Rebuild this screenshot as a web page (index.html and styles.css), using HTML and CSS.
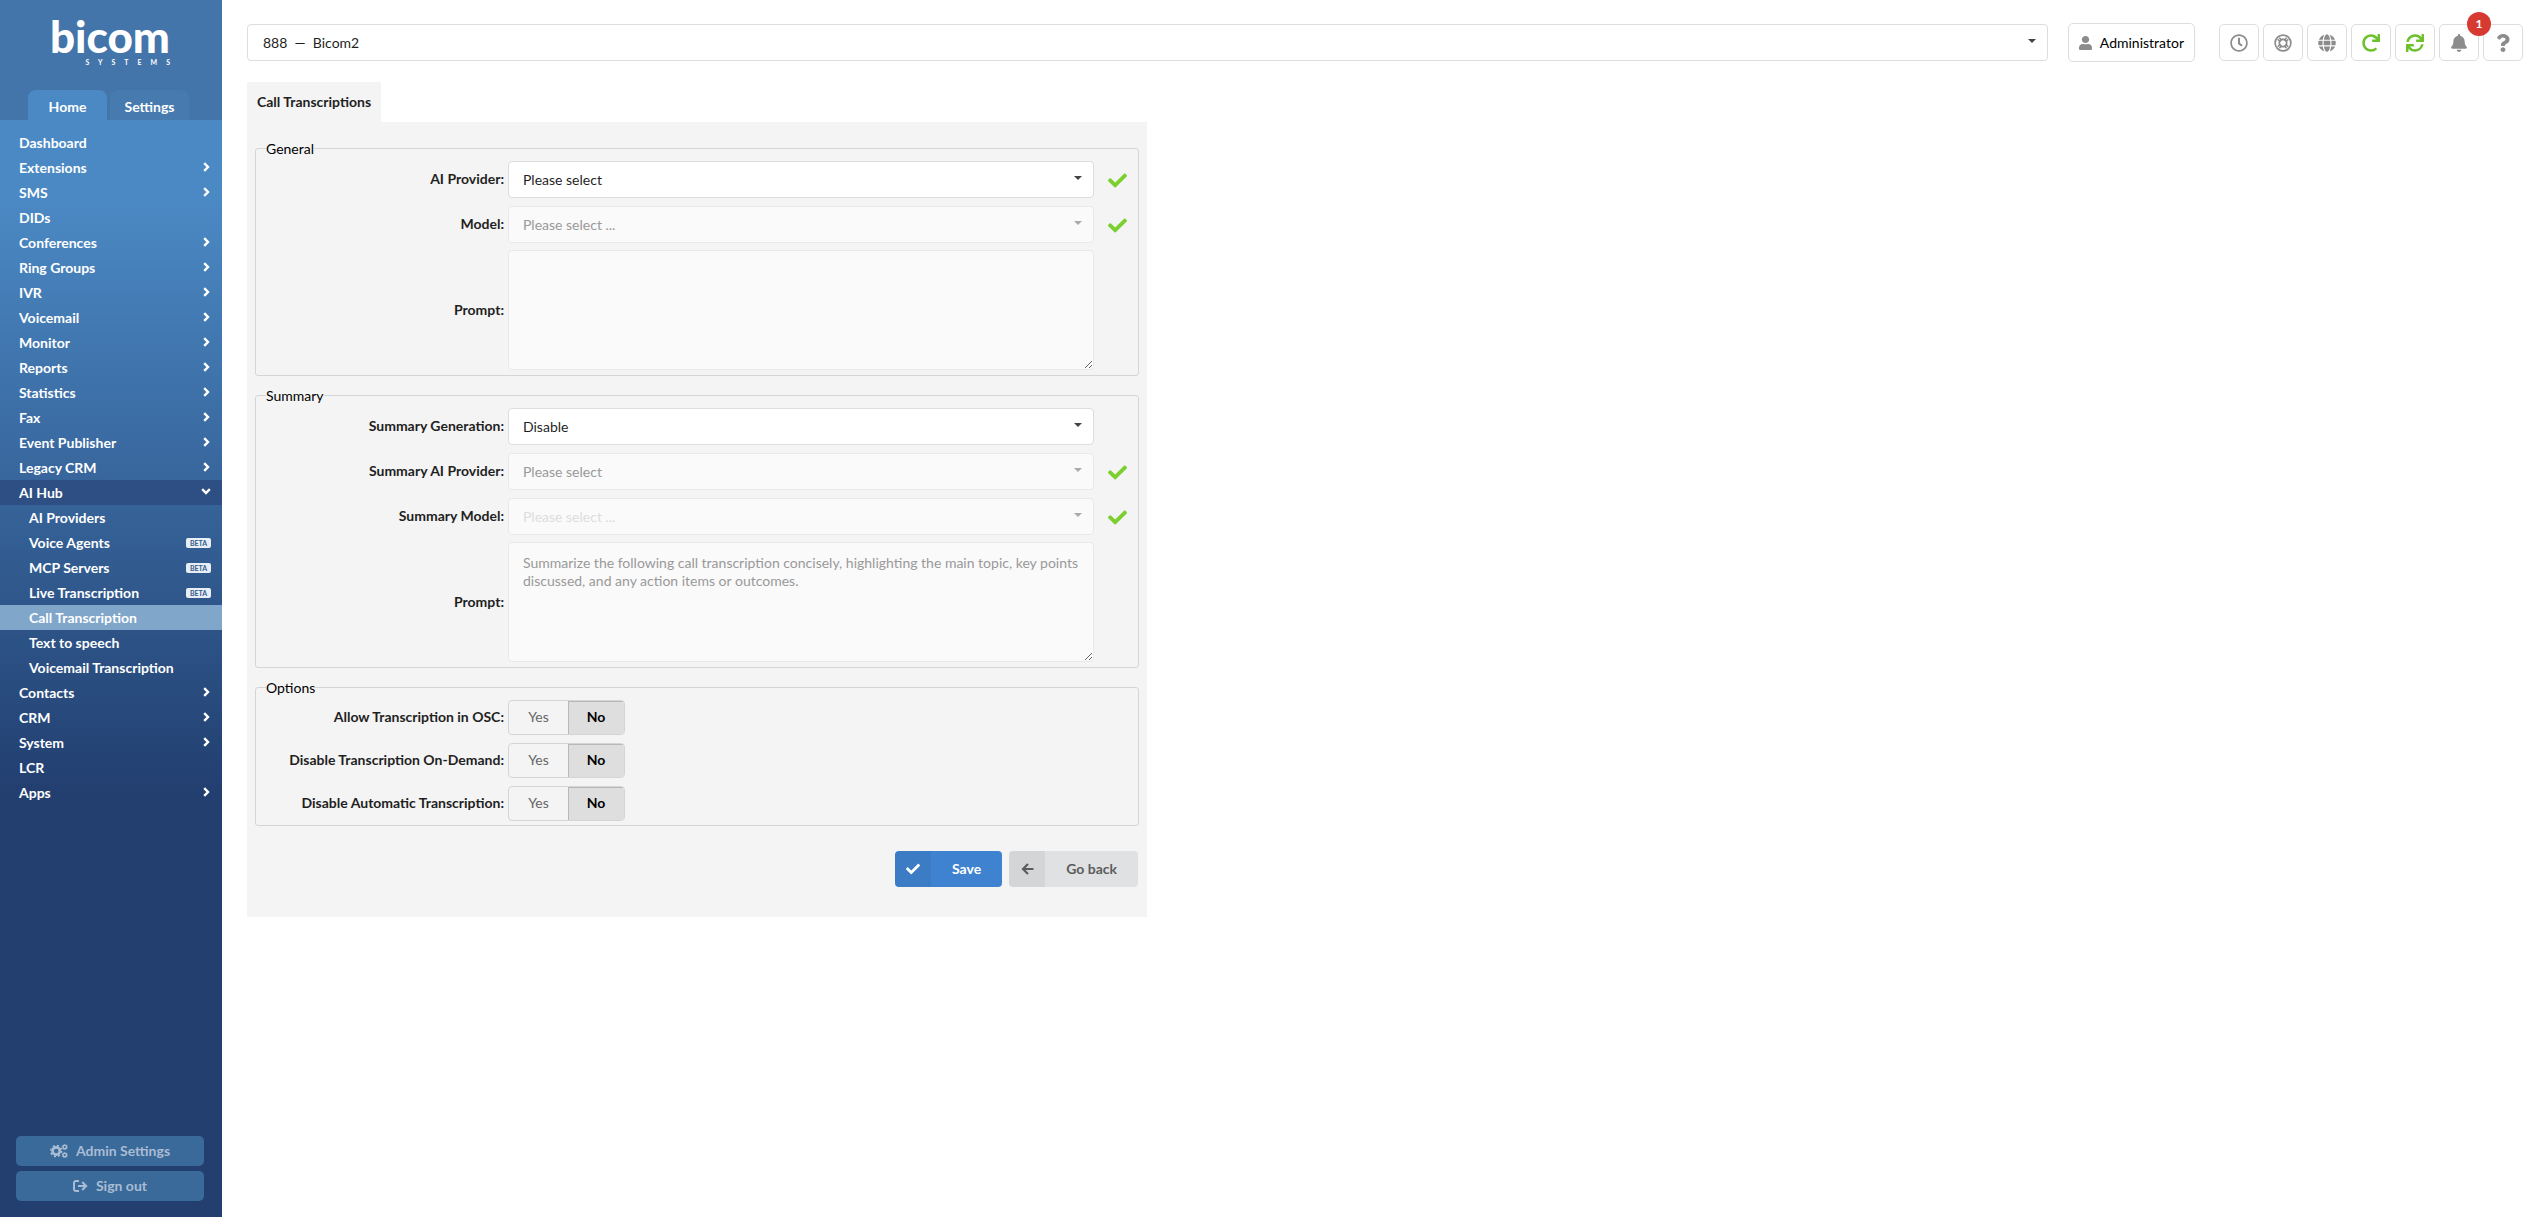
FILE: index.html
```html
<!DOCTYPE html>
<html lang="en">
<head>
    <meta charset="UTF-8">
    <meta name="viewport" content="width=device-width, initial-scale=1.0">
    <title>Call Transcriptions</title>
    <link rel="stylesheet" href="styles.css">
</head>
<body>
    <!-- shared icons -->
    <svg class="sprite" aria-hidden="true">
        <symbol id="i-right" viewBox="0 0 7 10"><path d="M1.200 1.200L5 5 1.200 8.800" fill="none" stroke="currentColor" stroke-width="2.4"/></symbol>
        <symbol id="i-down" viewBox="0 0 10 7"><path d="M1.200 1.200L5 5l3.800-3.800" fill="none" stroke="currentColor" stroke-width="2.4"/></symbol>
        <symbol id="i-check" viewBox="0 0 512 512"><path d="M173.9 439.4l-166.4-166.4c-10-10-10-26.2 0-36.2l36.2-36.2c10-10 26.2-10 36.2 0L192 312.7 432.1 72.6c10-10 26.2-10 36.2 0l36.2 36.2c10 10 10 26.2 0 36.2l-294.4 294.4c-10 10-26.2 10-36.2 0z"/></symbol>
    </svg>

    <aside class="sidebar">
        <div class="sidebar-head">
            <div class="logo">
                <span class="logo-name">bicom</span>
                <span class="logo-sub">SYSTEMS</span>
            </div>
            <div class="side-tabs">
                <a class="side-tab active" href="#">Home</a>
                <a class="side-tab" href="#">Settings</a>
            </div>
        </div>
        <nav class="menu">
            <a href="#">Dashboard</a>
            <a href="#">Extensions<svg class="chev"><use href="#i-right"/></svg></a>
            <a href="#">SMS<svg class="chev"><use href="#i-right"/></svg></a>
            <a href="#">DIDs</a>
            <a href="#">Conferences<svg class="chev"><use href="#i-right"/></svg></a>
            <a href="#">Ring Groups<svg class="chev"><use href="#i-right"/></svg></a>
            <a href="#">IVR<svg class="chev"><use href="#i-right"/></svg></a>
            <a href="#">Voicemail<svg class="chev"><use href="#i-right"/></svg></a>
            <a href="#">Monitor<svg class="chev"><use href="#i-right"/></svg></a>
            <a href="#">Reports<svg class="chev"><use href="#i-right"/></svg></a>
            <a href="#">Statistics<svg class="chev"><use href="#i-right"/></svg></a>
            <a href="#">Fax<svg class="chev"><use href="#i-right"/></svg></a>
            <a href="#">Event Publisher<svg class="chev"><use href="#i-right"/></svg></a>
            <a href="#">Legacy CRM<svg class="chev"><use href="#i-right"/></svg></a>
            <a class="open" href="#">AI Hub<svg class="chev chev-down"><use href="#i-down"/></svg></a>
            <a class="sub" href="#">AI Providers</a>
            <a class="sub" href="#">Voice Agents<span class="beta">BETA</span></a>
            <a class="sub" href="#">MCP Servers<span class="beta">BETA</span></a>
            <a class="sub" href="#">Live Transcription<span class="beta">BETA</span></a>
            <a class="sub current" href="#">Call Transcription</a>
            <a class="sub" href="#">Text to speech</a>
            <a class="sub" href="#">Voicemail Transcription</a>
            <a href="#">Contacts<svg class="chev"><use href="#i-right"/></svg></a>
            <a href="#">CRM<svg class="chev"><use href="#i-right"/></svg></a>
            <a href="#">System<svg class="chev"><use href="#i-right"/></svg></a>
            <a href="#">LCR</a>
            <a href="#">Apps<svg class="chev"><use href="#i-right"/></svg></a>
        </nav>
        <div class="sidebar-foot">
            <button type="button" class="side-btn">
                <svg class="line" width="18" height="14" viewBox="0 0 18 14">
                    <circle cx="6.2" cy="7" r="3.6" stroke-width="2.6"/>
                    <circle cx="6.2" cy="7" r="5.4" stroke-width="1.7" stroke-dasharray="2.12 2.12"/>
                    <circle cx="14.8" cy="3" r="1.8" stroke-width="1.5"/>
                    <circle cx="14.8" cy="3" r="2.6" stroke-width="0.8" stroke-dasharray="1.3 1.42"/>
                    <circle cx="14.8" cy="11" r="1.8" stroke-width="1.5"/>
                    <circle cx="14.8" cy="11" r="2.6" stroke-width="0.8" stroke-dasharray="1.3 1.42"/>
                </svg>
                <span>Admin Settings</span>
            </button>
            <button type="button" class="side-btn">
                <svg class="line" width="15" height="12" viewBox="0 0 15 12" stroke-width="2">
                    <path d="M6 1H3.200Q1 1 1 3.200V8.800Q1 11 3.200 11H6"/>
                    <path d="M5 6h8M9.200 2l4 4-4 4"/>
                </svg>
                <span>Sign out</span>
            </button>
        </div>
    </aside>

    <main class="main">
        <header class="topbar">
            <div class="select tenant">
                <select aria-label="Tenant">
                    <option>888 &nbsp;—&nbsp; Bicom2</option>
                </select>
            </div>
            <button type="button" class="user-btn">
                <svg class="user-icon" viewBox="0 0 448 512" preserveAspectRatio="none"><path d="M224 256c70.7 0 128-57.3 128-128S294.7 0 224 0 96 57.3 96 128s57.3 128 128 128zm89.6 32h-16.7c-22.2 10.2-46.9 16-72.9 16s-50.6-5.8-72.9-16h-16.7C60.2 288 0 348.2 0 422.4V464c0 26.5 21.5 48 48 48h352c26.5 0 48-21.5 48-48v-41.6c0-74.2-60.2-134.4-134.4-134.4z"/></svg>
                Administrator
            </button>
            <div class="tools">
                <button type="button" class="tool" aria-label="Time">
                    <svg viewBox="0 0 512 512"><path d="M256 8C119 8 8 119 8 256s111 248 248 248 248-111 248-248S393 8 256 8zm0 448c-110.500 0-200-89.500-200-200S145.500 56 256 56s200 89.500 200 200-89.500 200-200 200zm61.800-104.400l-84.900-61.700c-3.100-2.300-4.900-5.900-4.900-9.700V116c0-6.600 5.400-12 12-12h32c6.600 0 12 5.400 12 12v141.700l66.800 48.600c5.400 3.900 6.500 11.400 2.600 16.800L334.600 349c-3.900 5.300-11.400 6.500-16.800 2.600z"/></svg>
                </button>
                <button type="button" class="tool" aria-label="Support">
                    <svg class="line" viewBox="0 0 512 512">
                        <circle cx="256" cy="256" r="224" stroke-width="48"/>
                        <circle cx="256" cy="256" r="104" stroke-width="48"/>
                        <path d="M106 151l74 74M151 106l74 74M361 106l-74 74M406 151l-74 74M106 361l74-74M151 406l74-74M406 361l-74-74M361 406l-74-74" stroke-width="44"/>
                    </svg>
                </button>
                <button type="button" class="tool" aria-label="Language">
                    <svg viewBox="0 0 496 512"><path d="M336.5 160C322 70.7 287.8 8 248 8s-74 62.700-88.500 152h177zM152 256c0 22.200 1.200 43.500 3.300 64h185.300c2.100-20.500 3.300-41.800 3.300-64s-1.200-43.500-3.300-64H155.300c-2.100 20.500-3.300 41.800-3.300 64zm324.700-96c-28.600-67.900-86.500-120.400-158-141.600 24.400 33.800 41.200 84.700 50 141.600h108zM177.200 18.400C105.800 39.600 47.800 92.100 19.300 160h108c8.700-56.900 25.500-107.800 49.900-141.600zM487.400 192H372.700c2.100 21 3.300 42.500 3.300 64s-1.200 43-3.300 64h114.600c5.500-20.500 8.600-41.800 8.600-64s-3.100-43.500-8.500-64zM120 256c0-21.500 1.200-43 3.300-64H8.600C3.200 212.500 0 233.800 0 256s3.200 43.500 8.600 64h114.600c-2-21-3.200-42.500-3.200-64zm39.500 96c14.500 89.300 48.700 152 88.500 152s74-62.700 88.500-152h-177zm159.300 141.600c71.400-21.200 129.400-73.700 158-141.600h-108c-8.800 56.900-25.600 107.800-50 141.600zM19.300 352c28.600 67.900 86.500 120.400 158 141.600-24.400-33.800-41.200-84.700-50-141.600h-108z"/></svg>
                </button>
                <button type="button" class="tool green" aria-label="Reload">
                    <svg viewBox="0 0 512 512"><path d="M500.330 0h-47.410a12 12 0 0 0-12 12.570l4 82.760A247.420 247.420 0 0 0 256 8C119.340 8 7.900 119.530 8 256.190 8.100 393.070 119.100 504 256 504a247.100 247.100 0 0 0 166.180-63.910 12 12 0 0 0 .48-17.430l-34-34a12 12 0 0 0-16.380-.55A176 176 0 1 1 402.100 157.800l-101.530-4.870a12 12 0 0 0-12.570 12v47.410a12 12 0 0 0 12 12h200.330a12 12 0 0 0 12-12V12a12 12 0 0 0-12-12z"/></svg>
                </button>
                <button type="button" class="tool green" aria-label="Sync">
                    <svg viewBox="0 0 512 512"><path d="M440.650 12.570l4 82.770A247.160 247.160 0 0 0 255.830 8C134.730 8 33.910 94.920 12.290 209.820A12 12 0 0 0 24.090 224h49.050a12 12 0 0 0 11.670-9.260 175.910 175.910 0 0 1 317-56.940l-101.460-4.860a12 12 0 0 0-12.570 12v47.410a12 12 0 0 0 12 12H500a12 12 0 0 0 12-12V12a12 12 0 0 0-12-12h-47.370a12 12 0 0 0-11.980 12.570zM255.830 432a175.610 175.610 0 0 1-146-77.800l101.800 4.870a12 12 0 0 0 12.570-12v-47.400a12 12 0 0 0-12-12H12a12 12 0 0 0-12 12V500a12 12 0 0 0 12 12h47.350a12 12 0 0 0 12-12.600l-4.150-82.570A247.170 247.170 0 0 0 255.830 504c121.110 0 221.930-86.920 243.550-201.820a12 12 0 0 0-11.800-14.180h-49.050a12 12 0 0 0-11.670 9.260A175.860 175.860 0 0 1 255.830 432z"/></svg>
                </button>
                <button type="button" class="tool" aria-label="Notifications">
                    <svg viewBox="0 0 448 512"><path d="M224 512c35.320 0 63.970-28.650 63.970-64H160.030c0 35.350 28.650 64 63.970 64zm215.390-149.710c-19.320-20.760-55.470-51.990-55.470-154.290 0-77.700-54.480-139.900-127.940-155.160V32c0-17.670-14.320-32-31.980-32s-31.980 14.330-31.980 32v20.840C118.560 68.100 64.080 130.300 64.080 208c0 102.300-36.150 133.530-55.470 154.290-6 6.450-8.660 14.160-8.610 21.710.11 16.400 12.980 32 32.100 32h383.800c19.120 0 32-15.600 32.100-32 .05-7.550-2.610-15.270-8.610-21.710z"/></svg>
                    <span class="badge">1</span>
                </button>
                <button type="button" class="tool" aria-label="Help">
                    <svg viewBox="0 0 384 512"><path d="M202.021 0C122.202 0 70.503 32.703 29.914 91.026c-7.363 10.580-5.093 25.086 5.178 32.874l43.138 32.709c10.373 7.865 25.132 6.026 33.253-4.148 25.049-31.381 43.630-49.449 82.757-49.449 30.764 0 68.816 19.799 68.816 49.631 0 22.552-18.617 34.134-48.993 51.164-35.423 19.860-82.299 44.576-82.299 106.405V320c0 13.255 10.745 24 24 24h72.471c13.255 0 24-10.745 24-24v-5.773c0-42.860 125.268-44.645 125.268-160.627C377.504 66.256 286.902 0 202.021 0zM192 373.459c-38.196 0-69.271 31.075-69.271 69.271 0 38.195 31.075 69.270 69.271 69.270s69.271-31.075 69.271-69.271-31.075-69.270-69.271-69.270z"/></svg>
                </button>
            </div>
        </header>

        <a class="page-tab" href="#">Call Transcriptions</a>
        <form class="panel">
            <fieldset>
                <legend>General</legend>
                <div class="row">
                    <label class="name" for="provider">AI Provider:</label>
                    <div class="select"><select id="provider"><option>Please select</option></select></div>
                    <svg class="valid"><use href="#i-check"/></svg>
                </div>
                <div class="row">
                    <label class="name" for="model">Model:</label>
                    <div class="select"><select id="model" disabled><option>Please select ...</option></select></div>
                    <svg class="valid"><use href="#i-check"/></svg>
                </div>
                <div class="row row-text">
                    <label class="name" for="prompt">Prompt:</label>
                    <textarea id="prompt" disabled></textarea>
                </div>
            </fieldset>

            <fieldset>
                <legend>Summary</legend>
                <div class="row">
                    <label class="name" for="sumGeneration">Summary Generation:</label>
                    <div class="select"><select id="sumGeneration"><option>Disable</option></select></div>
                </div>
                <div class="row">
                    <label class="name" for="sumProvider">Summary AI Provider:</label>
                    <div class="select"><select id="sumProvider" disabled><option>Please select</option></select></div>
                    <svg class="valid"><use href="#i-check"/></svg>
                </div>
                <div class="row">
                    <label class="name" for="sumModel">Summary Model:</label>
                    <div class="select"><select id="sumModel" class="empty" disabled><option>Please select ...</option></select></div>
                    <svg class="valid"><use href="#i-check"/></svg>
                </div>
                <div class="row row-text">
                    <label class="name" for="sumPrompt">Prompt:</label>
                    <textarea id="sumPrompt" disabled>Summarize the following call transcription concisely, highlighting the main topic, key points discussed, and any action items or outcomes.</textarea>
                </div>
            </fieldset>

            <fieldset>
                <legend>Options</legend>
                <div class="row">
                    <span class="name" id="oscLabel">Allow Transcription in OSC:</span>
                    <div class="yesno" role="radiogroup" aria-labelledby="oscLabel">
                        <input type="radio" name="osc" id="oscYes"><label for="oscYes">Yes</label>
                        <input type="radio" name="osc" id="oscNo" checked><label for="oscNo">No</label>
                    </div>
                </div>
                <div class="row">
                    <span class="name" id="demandLabel">Disable Transcription On-Demand:</span>
                    <div class="yesno" role="radiogroup" aria-labelledby="demandLabel">
                        <input type="radio" name="demand" id="demandYes"><label for="demandYes">Yes</label>
                        <input type="radio" name="demand" id="demandNo" checked><label for="demandNo">No</label>
                    </div>
                </div>
                <div class="row">
                    <span class="name" id="autoLabel">Disable Automatic Transcription:</span>
                    <div class="yesno" role="radiogroup" aria-labelledby="autoLabel">
                        <input type="radio" name="auto" id="autoYes"><label for="autoYes">Yes</label>
                        <input type="radio" name="auto" id="autoNo" checked><label for="autoNo">No</label>
                    </div>
                </div>
            </fieldset>

            <div class="actions">
                <button type="button" class="btn btn-save">
                    <span class="btn-icon"><svg width="14" height="14"><use href="#i-check"/></svg></span>
                    <span class="btn-text">Save</span>
                </button>
                <button type="button" class="btn btn-back">
                    <span class="btn-icon"><svg class="line" width="13" height="12" viewBox="0 0 13 12" stroke-width="2.2"><path d="M12.500 6H2M7 1L2 6l5 5"/></svg></span>
                    <span class="btn-text">Go back</span>
                </button>
            </div>
        </form>
    </main>
</body>
</html>
```
FILE: styles.css
```css
* {
    box-sizing: border-box;
}
body {
    margin: 0;
    display: flex;
    min-height: 100vh;
    font-family: Lato, "Liberation Sans", sans-serif;
    font-size: 14px;
    line-height: 17px;
    color: #1f1f1f;
    background: #fff;
}
a {
    color: inherit;
    text-decoration: none;
}
button, select, textarea {
    font: inherit;
    color: inherit;
}
button {
    cursor: pointer;
}
svg {
    fill: currentColor;
    flex: none;
}
svg.line {
    fill: none;
    stroke: currentColor;
}
.sprite {
    position: absolute;
    width: 0;
    height: 0;
}

/* sidebar */
.sidebar {
    width: 222px;
    flex: none;
    display: flex;
    flex-direction: column;
    color: #fff;
    font-weight: bold;
    background: linear-gradient(#4b89c4 200px, #223f70 790px);
}
.sidebar-head {
    height: 120px;
    display: flex;
    flex-direction: column;
    justify-content: space-between;
    background: #4375aa;
}
.logo {
    width: 120px;
    margin: 14px auto 0 50px;
    display: flex;
    flex-direction: column;
}
.logo-name {
    font-size: 44px;
    font-weight: 900;
    line-height: 44px;
}
.logo-sub {
    align-self: flex-end;
    font-size: 7px;
    line-height: 8px;
    letter-spacing: 9px;
    margin-right: -9px;
}
.side-tabs {
    display: flex;
    gap: 3px;
    padding-left: 28px;
}
.side-tab {
    width: 79px;
    height: 30px;
    padding-top: 8px;
    text-align: center;
    border-radius: 8px 8px 0 0;
    background: #477aaf;
}
.side-tab.active {
    background: #4b89c4;
}
.menu {
    padding-top: 10px;
}
.menu a {
    display: flex;
    align-items: center;
    justify-content: space-between;
    height: 25px;
    padding: 0 11px 0 19px;
}
.menu a.sub {
    padding-left: 29px;
}
.menu a.open {
    background: #2d4f83;
}
.menu a.current {
    background: #80a6ca;
}
.chev {
    width: 7px;
    height: 10px;
    margin: 0 1px 2px 0;
}
.chev-down {
    width: 10px;
    height: 7px;
    margin-right: 0;
}
.beta {
    width: 25px;
    height: 10px;
    border-radius: 2px;
    font-size: 7px;
    line-height: 10px;
    text-align: center;
    color: #315a8e;
    background: #e9eef4;
}
.sidebar-foot {
    display: flex;
    flex-direction: column;
    gap: 5px;
    margin-top: auto;
    padding: 0 18px 16px 16px;
}
.side-btn {
    display: flex;
    align-items: center;
    justify-content: center;
    gap: 8px;
    height: 30px;
    padding: 0 6px 1px;
    border: none;
    border-radius: 5px;
    font-weight: bold;
    color: #a9bcd3;
    background: #3a6a9a;
}

/* top bar */
.main {
    flex: 1;
    min-width: 0;
    padding: 23px 23px 0 25px;
}
.topbar {
    display: flex;
    align-items: center;
    height: 39px;
    margin-bottom: 20px;
}
.select {
    position: relative;
    flex: 1;
}
.select::after {
    content: "";
    position: absolute;
    right: 12px;
    top: 15px;
    border: 4px solid transparent;
    border-top-color: #444;
    border-bottom: none;
    pointer-events: none;
}
.select:has(select:disabled)::after {
    border-top-color: #aaa;
}
select {
    appearance: none;
    display: block;
    width: 100%;
    height: 37px;
    padding: 0 30px 0 14px;
    border: 1px solid #dcdddd;
    border-radius: 4px;
    background: #fff;
    opacity: 1;
}
.tenant select {
    padding-left: 15px;
}
select:disabled, textarea:disabled {
    color: #999;
    border-color: #e9e9e9;
    background: #fafafa;
}
select.empty:disabled {
    color: #ddd;
}
.user-btn {
    display: flex;
    align-items: center;
    gap: 8px;
    height: 39px;
    margin: 0 24px 0 20px;
    padding: 0 10px;
    border: 1px solid #dcdddd;
    border-radius: 5px;
    color: #000;
    background: #fff;
}
.user-icon {
    width: 13px;
    height: 14px;
    fill: #8c8c8c;
}
.tools {
    display: flex;
    gap: 4px;
}
.tool {
    position: relative;
    display: flex;
    align-items: center;
    justify-content: center;
    width: 40px;
    height: 37px;
    padding: 0;
    border: 1px solid #dcdddd;
    border-radius: 5px;
    color: #8c8c8c;
    background: #fff;
}
.tool svg {
    width: 18px;
    height: 18px;
}
.tool.green {
    color: #6cc12c;
}
.badge {
    position: absolute;
    z-index: 1;
    top: -13px;
    right: -13px;
    width: 24px;
    height: 24px;
    border-radius: 50%;
    font-size: 12px;
    font-weight: bold;
    line-height: 24px;
    color: #fff;
    background: #d63a31;
}

/* form */
.page-tab {
    display: inline-block;
    vertical-align: top;
    height: 40px;
    padding: 11px 10px 0;
    font-weight: bold;
    background: #f4f4f4;
}
.panel {
    max-width: 900px;
    padding: 18px 8px 30px;
    background: #f4f4f4;
}
fieldset {
    min-width: 0;
    margin: 0 0 11px;
    padding: 0;
    border: 1px solid #d4d5d6;
    border-radius: 3px;
}
legend {
    margin-left: 10px;
    padding: 0;
    color: #000;
}
.row {
    display: flex;
    align-items: center;
    gap: 4px;
    padding: 4px 44px 4px 0;
}
.row-text {
    padding: 3px 44px 5px 0;
}
.name {
    width: 248px;
    flex: none;
    padding-bottom: 2px;
    font-weight: bold;
    text-align: right;
}
textarea {
    display: block;
    flex: 1;
    height: 120px;
    padding: 11px 14px;
    border: 1px solid #e9e9e9;
    border-radius: 4px;
    line-height: 18px;
    resize: vertical;
}
.valid {
    width: 19px;
    height: 19px;
    margin: 2px -33px 0 10px;
    color: #7bd02f;
}
.yesno {
    position: relative;
    display: flex;
    width: 117px;
    height: 35px;
    border: 1px solid #d4d5d6;
    border-radius: 4px;
    overflow: hidden;
}
.yesno input {
    position: absolute;
    opacity: 0;
}
.yesno label {
    width: 59px;
    line-height: 32px;
    text-align: center;
    color: #666;
}
.yesno label:last-child {
    flex: 1;
}
.yesno input:checked + label {
    font-weight: bold;
    color: #000;
    background: #dedede;
    box-shadow: inset 1px 1px 0 #b8b8b8;
}
.actions {
    display: flex;
    justify-content: flex-end;
    gap: 7px;
    padding: 14px 1px 0 0;
}
.btn {
    display: flex;
    height: 36px;
    padding: 0;
    border: none;
    border-radius: 4px;
    font-weight: bold;
    line-height: 36px;
    overflow: hidden;
}
.btn-icon {
    display: flex;
    align-items: center;
    justify-content: center;
    width: 36px;
    height: 36px;
    background: rgba(0, 0, 0, 0.05);
}
.btn-text {
    padding: 0 21px;
}
.btn-save {
    color: #fff;
    background: #3f83d0;
}
.btn-back {
    color: #5c5c5c;
    background: #dfe1e2;
}
```
